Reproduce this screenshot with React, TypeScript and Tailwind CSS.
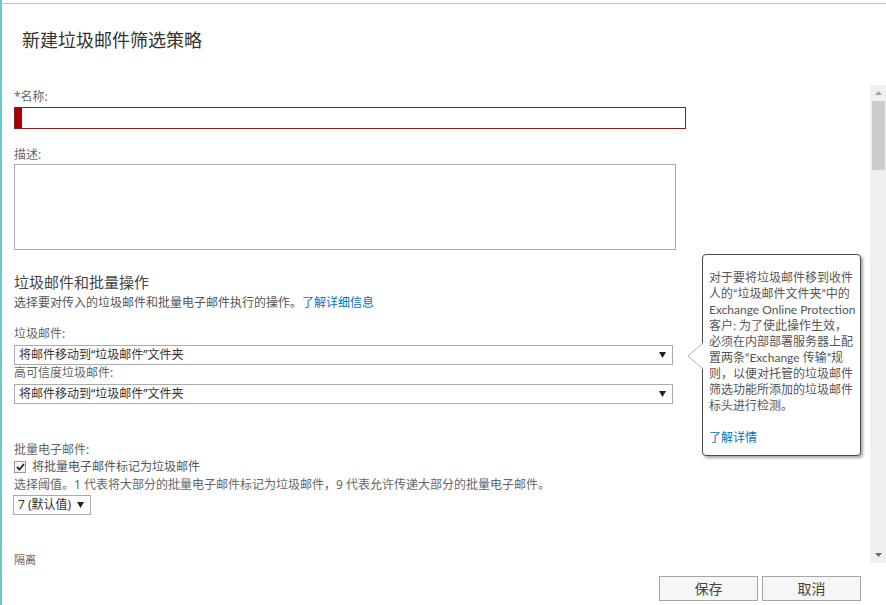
const Arrow = () => (
  <svg width="7" height="6" viewBox="0 0 7 6" className="shrink-0">
    <polygon points="0,0 7,0 3.5,6" fill="#222" />
  </svg>
);

const Select = ({ text, width }: { text: string; width: string }) => (
  <div
    className={`${width} h-[20px] border border-[#ababab] bg-white flex items-center justify-between pl-[4px] pr-[6px] text-[12px] text-[#333] leading-[18px]`}
  >
    <span>{text}</span>
    <Arrow />
  </div>
);

const Label = ({ children, className = "" }: { children: React.ReactNode; className?: string }) => (
  <div className={`text-[12px] leading-[16px] text-[#666] ${className}`}>{children}</div>
);

const Scrollbar = () => (
  <div className="w-[16px] h-[478px] bg-[#f0f0f0] flex flex-col items-center shrink-0">
    <div className="h-[16px] w-full flex items-center justify-center">
      <svg width="7" height="4" viewBox="0 0 7 4">
        <polygon points="0,4 7,4 3.5,0" fill="#a6a6a6" />
      </svg>
    </div>
    <div className="w-[13px] h-[69px] bg-[#cdcdcd]" />
    <div className="flex-1" />
    <div className="h-[16px] w-full flex items-center justify-center">
      <svg width="7" height="4" viewBox="0 0 7 4">
        <polygon points="0,0 7,0 3.5,4" fill="#6e6e6e" />
      </svg>
    </div>
  </div>
);

const Callout = () => (
  <div className="absolute left-[700px] top-[254px] w-[159px] h-[202px] bg-white border border-[#4a4a4a] rounded-[4px] shadow-[2px_2px_3px_rgba(0,0,0,0.35)] pl-[6px] pt-[15px] text-[12px] leading-[16px] text-[#555] font-['Lato','Noto_Sans_CJK_SC',sans-serif]">
    <svg width="17" height="26" viewBox="0 0 17 26" className="absolute left-[-16px] top-[88px]">
      <polyline points="16,0 1,13 16,26" fill="white" stroke="#b0b0b0" strokeWidth="1" />
    </svg>
    <p className="whitespace-nowrap">
      对于要将垃圾邮件移到收件
      <br />
      人的“垃圾邮件文件夹”中的
      <br />
      Exchange Online Protection
      <br />
      客户: 为了使此操作生效，
      <br />
      必须在内部部署服务器上配
      <br />
      置两条“Exchange 传输”规
      <br />
      则，以便对托管的垃圾邮件
      <br />
      筛选功能所添加的垃圾邮件
      <br />
      标头进行检测。
    </p>
    <p className="mt-[16px] text-[#0072c6]">了解详情</p>
  </div>
);

export default function App() {
  return (
    <div className="w-[886px] h-[605px] bg-white relative overflow-hidden flex flex-col border-l-2 border-[#6cc6cd] font-['Segoe_UI','Noto_Sans','Noto_Sans_CJK_SC',sans-serif]">
      <div className="mt-[3px] border-t border-[#c4c4c4]" />
      <h1 className="mt-[24px] pl-[20px] text-[18px] leading-[24px] text-[#333]">新建垃圾邮件筛选策略</h1>

      <div className="mt-[33px] h-[483px] flex items-start">
        <div className="flex-1 h-full overflow-hidden pl-[12px] flex flex-col">
          <Label className="mt-[4px]">*名称:</Label>
          <div className="mt-[2px] w-[672px] h-[22px] border border-[#8b1a1a] flex shrink-0">
            <div className="w-[7px] h-full bg-[#a80000]" />
          </div>

          <Label className="mt-[18px]">描述:</Label>
          <div className="mt-[1px] w-[662px] h-[86px] border border-[#ababab] shrink-0" />

          <h2 className="mt-[23px] text-[15px] leading-[18px] text-[#444]">垃圾邮件和批量操作</h2>
          <div className="mt-[4px] text-[12px] leading-[16px] text-[#555]">
            选择要对传入的垃圾邮件和批量电子邮件执行的操作。
            <span className="text-[#0072c6]">了解详细信息</span>
          </div>

          <Label className="mt-[15px]">垃圾邮件:</Label>
          <div className="mt-[3px]">
            <Select text="将邮件移动到“垃圾邮件”文件夹" width="w-[659px]" />
          </div>
          <Label>高可信度垃圾邮件:</Label>
          <div className="mt-[3px]">
            <Select text="将邮件移动到“垃圾邮件”文件夹" width="w-[659px]" />
          </div>

          <Label className="mt-[38px]">批量电子邮件:</Label>
          <div className="mt-[1px] flex items-center gap-[6px] text-[12px] leading-[16px] text-[#555]">
            <div className="w-[12px] h-[12px] border border-[#9a9a9a] bg-[#f4f4f4] flex items-center justify-center">
              <svg width="9" height="8" viewBox="0 0 9 8">
                <polyline points="1,4 3.5,6.5 8,1" fill="none" stroke="#222" strokeWidth="1.8" />
              </svg>
            </div>
            <span>将批量电子邮件标记为垃圾邮件</span>
          </div>
          <Label className="mt-[2px]">
            选择阈值。1 代表将大部分的批量电子邮件标记为垃圾邮件，9 代表允许传递大部分的批量电子邮件。
          </Label>
          <div className="mt-[2px] -ml-[1px]">
            <div className="w-[78px] h-[20px] border border-[#ababab] flex items-center gap-[6px] pl-[4px] text-[12px] text-[#333]">
              <span>7 (默认值)</span>
              <Arrow />
            </div>
          </div>

          <div className="mt-[37px] text-[11px] leading-[16px] text-[#666]">隔离</div>
        </div>
        <Scrollbar />
      </div>

      <div className="mt-[8px] flex justify-end gap-[4px] pr-[25px]">
        <button className="w-[99px] h-[25px] border border-[#a6a6a6] bg-[#f6f6f6] text-[14px] text-[#444]">保存</button>
        <button className="w-[99px] h-[25px] border border-[#a6a6a6] bg-[#f6f6f6] text-[14px] text-[#444]">取消</button>
      </div>

      <Callout />
    </div>
  );
}
